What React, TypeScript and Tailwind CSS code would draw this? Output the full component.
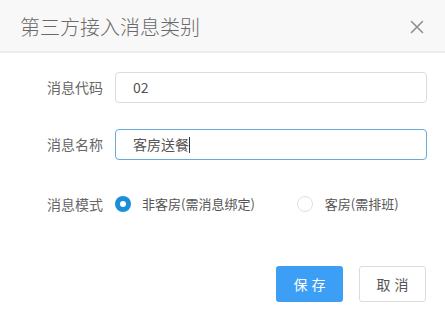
import React from "react";

export default function App() {
  const font = { fontFamily: '"Noto Sans CJK SC", "Noto Sans", sans-serif' };
  return (
    <div className="w-[445px] h-[319px] bg-white overflow-hidden" style={font}>
      <div className="h-[53px] bg-[#f8f8f8] border-b-2 border-[#ececec] flex items-center justify-between pl-[20px] pr-[21px]">
        <span className="text-[20px] leading-none text-[#6a6a6a] font-light pt-[3px]">第三方接入消息类别</span>
        <svg width="14" height="14" viewBox="0 0 14 14" className="mt-[2px]">
          <path d="M1.5 1.5 L12.5 12.5 M12.5 1.5 L1.5 12.5" stroke="#8f8f8f" strokeWidth="1.6" strokeLinecap="round" />
        </svg>
      </div>
      <div className="pl-[47px] pr-[18px] pt-[19px]">
        <div className="flex items-center">
          <span className="w-[68px] text-[14px] text-[#666]">消息代码</span>
          <div className="flex-1 h-[31px] border border-[#dcdcdc] rounded-[4px] flex items-center pl-[17px] text-[14px] text-[#555]">
            02
          </div>
        </div>
        <div className="flex items-center mt-[26px]">
          <span className="w-[68px] text-[14px] text-[#666]">消息名称</span>
          <div className="flex-1 h-[31px] border border-[#66a9dc] rounded-[4px] flex items-center pl-[17px] text-[14px] text-[#555]">
            客房送餐
            <span className="w-[1px] h-[16px] bg-[#333]" />
          </div>
        </div>
        <div className="flex items-center mt-[34px] h-[20px]">
          <span className="w-[68px] text-[14px] text-[#666]">消息模式</span>
          <div className="flex items-center">
            <span className="w-[16px] h-[16px] rounded-full bg-[#1a8fd8] flex items-center justify-center">
              <span className="w-[6px] h-[6px] rounded-full bg-white" />
            </span>
            <span className="ml-[11px] text-[13px] text-[#555]">非客房(需消息绑定)</span>
          </div>
          <div className="flex items-center ml-[42px]">
            <span className="w-[16px] h-[16px] rounded-full border border-[#e0e0e0] bg-white" />
            <span className="ml-[12px] text-[13px] text-[#555]">客房(需排班)</span>
          </div>
        </div>
        <div className="flex justify-end mt-[52px] pr-[1px] gap-[16px]">
          <button className="w-[67px] h-[36px] rounded-[3px] bg-[#3d9ef5] text-white text-[14px] tracking-[4px] pl-[4px]">
            保存
          </button>
          <button className="w-[67px] h-[36px] rounded-[3px] bg-white border border-[#dcdcdc] text-[#555] text-[14px] tracking-[4px] pl-[4px]">
            取消
          </button>
        </div>
      </div>
    </div>
  );
}
